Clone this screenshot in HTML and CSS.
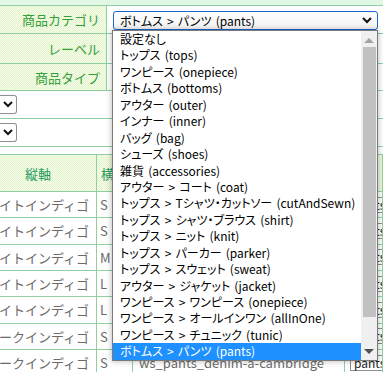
FILE: index.html
```html
<!DOCTYPE html>
<html lang="ja">
<head>
  <meta charset="UTF-8" />
  <title>商品登録</title>
  <link rel="stylesheet" href="styles.css">
</head>
<body>
  <div class="top-strip"></div>

  <div class="form">
    <div class="form-row row-cat">
      <div class="label">商品カテゴリ</div>
      <div class="field">
        <div class="select focus">
          <span>ボトムス &gt; パンツ (pants)</span>
          <svg width="10" height="7" viewBox="0 0 10 7"><polyline points="1,1 5,5 9,1" fill="none" stroke="#111" stroke-width="2"/></svg>
        </div>
        <div class="dropdown">
          <ul class="options">
            <li>設定なし</li>
            <li>トップス (tops)</li>
            <li>ワンピース (onepiece)</li>
            <li>ボトムス (bottoms)</li>
            <li>アウター (outer)</li>
            <li>インナー (inner)</li>
            <li>バッグ (bag)</li>
            <li>シューズ (shoes)</li>
            <li>雑貨 (accessories)</li>
            <li>アウター &gt; コート (coat)</li>
            <li>トップス &gt; Tシャツ・カットソー (cutAndSewn)</li>
            <li>トップス &gt; シャツ・ブラウス (shirt)</li>
            <li>トップス &gt; ニット (knit)</li>
            <li>トップス &gt; パーカー (parker)</li>
            <li>トップス &gt; スウェット (sweat)</li>
            <li>アウター &gt; ジャケット (jacket)</li>
            <li>ワンピース &gt; ワンピース (onepiece)</li>
            <li>ワンピース &gt; オールインワン (allInOne)</li>
            <li>ワンピース &gt; チュニック (tunic)</li>
            <li class="selected">ボトムス &gt; パンツ (pants)</li>
          </ul>
          <div class="scrollbar">
            <div class="arrow up"></div>
            <div class="thumb"></div>
            <div class="arrow down"></div>
          </div>
        </div>
      </div>
    </div>
    <div class="form-row row-label">
      <div class="label">レーベル</div>
      <div class="field"></div>
    </div>
    <div class="form-row row-type">
      <div class="label">商品タイプ</div>
      <div class="field"></div>
    </div>
  </div>

  <div class="filters">
    <div class="filter-row"><div class="stub"><svg width="10" height="7" viewBox="0 0 10 7"><polyline points="1,1 5,5 9,1" fill="none" stroke="#111" stroke-width="2"/></svg></div></div>
    <div class="filter-row"><div class="stub"><svg width="10" height="7" viewBox="0 0 10 7"><polyline points="1,1 5,5 9,1" fill="none" stroke="#111" stroke-width="2"/></svg></div></div>
  </div>

  <div class="grid">
    <div class="grid-row head">
      <div class="c1">縦軸</div>
      <div class="c2">横軸</div>
      <div class="c3">商品コード</div>
      <div class="c4">種別</div>
    </div>
    <div class="grid-row"><div class="c1">ホワイトインディゴ</div><div class="c2">S</div><div class="c3">ws_pants_denim-a-cambridge</div><div class="c4"><span class="mini">pants</span></div></div>
    <div class="grid-row"><div class="c1">ホワイトインディゴ</div><div class="c2">S</div><div class="c3">ws_pants_denim-a-cambridge</div><div class="c4"><span class="mini">pants</span></div></div>
    <div class="grid-row"><div class="c1">ホワイトインディゴ</div><div class="c2">M</div><div class="c3">ws_pants_denim-a-cambridge</div><div class="c4"><span class="mini">pants</span></div></div>
    <div class="grid-row"><div class="c1">ホワイトインディゴ</div><div class="c2">L</div><div class="c3">ws_pants_denim-a-cambridge</div><div class="c4"><span class="mini">pants</span></div></div>
    <div class="grid-row"><div class="c1">ホワイトインディゴ</div><div class="c2">L</div><div class="c3">ws_pants_denim-a-cambridge</div><div class="c4"><span class="mini">pants</span></div></div>
    <div class="grid-row"><div class="c1">ダークインディゴ</div><div class="c2">S</div><div class="c3">ws_pants_denim-a-cambridge</div><div class="c4"><span class="mini">pants</span></div></div>
    <div class="grid-row"><div class="c1">ダークインディゴ</div><div class="c2">S</div><div class="c3">ws_pants_denim-a-cambridge</div><div class="c4"><span class="mini">pants</span></div></div>
  </div>
</body>
</html>
```

FILE: styles.css
```css
body {
  margin: 0;
  font-family: "Noto Sans CJK JP", "Noto Sans", sans-serif;
  font-size: 13px;
  background: #fff;
  overflow: hidden;
  width: 383px;
}

.top-strip {
  height: 5px;
  background: #e2f8e6;
}

/* form table */
.form {
  border-top: 1px solid #90d0a0;
}

.form-row {
  display: flex;
  border-bottom: 1px solid #90d0a0;
}

.row-cat { height: 27px; }
.row-label { height: 29px; }
.row-type { height: 26px; }

.label {
  width: 100px;
  flex: none;
  padding-right: 6px;
  border-right: 1px solid #90d0a0;
  display: flex;
  align-items: center;
  justify-content: flex-end;
  color: #34a03a;
  background: repeating-conic-gradient(#e4f4cc 0 25%, #f6fcea 0 50%) 0 0 / 2px 2px;
}

.field {
  flex: 1;
  position: relative;
  padding: 5px 5px 0 6px;
}

.select {
  height: 17px;
  border: 1px solid #8f8f8f;
  border-radius: 3px;
  display: flex;
  align-items: center;
  justify-content: space-between;
  padding: 0 5px 0 6px;
  font-size: 12px;
  font-feature-settings: "palt";
  word-spacing: 1.5px;
  color: #000;
  background: linear-gradient(#fff, #f4f4f4);
}

.select.focus {
  border-color: #1a66d2;
}

/* open list */
.dropdown {
  position: absolute;
  left: 5px;
  top: 24px;
  width: 264px;
  height: 329px;
  border: 1px solid #7a7a7a;
  background: #fff;
  display: flex;
  box-shadow: 0 0 6px rgba(0, 0, 0, 0.3);
  z-index: 5;
}

.options {
  list-style: none;
  margin: 0;
  padding: 0;
  flex: 1;
  overflow: hidden;
}

.options li {
  height: 16.45px;
  line-height: 16.45px;
  padding-left: 7px;
  font-size: 12px;
  font-feature-settings: "palt";
  word-spacing: 1.5px;
  color: #000;
  white-space: nowrap;
}

.options li.selected {
  background: #1e90ff;
  color: #fff;
}

.scrollbar {
  width: 16px;
  flex: none;
  background: #f0f0f0;
  display: flex;
  flex-direction: column;
  align-items: center;
}

.thumb {
  width: 13px;
  height: 270px;
  background: #c1c1c1;
  margin: 4px 0 auto;
}

.arrow {
  width: 0;
  height: 0;
  border-left: 5px solid transparent;
  border-right: 5px solid transparent;
}

.arrow.up {
  margin-top: 7px;
  border-bottom: 5px solid #a3a3a3;
}

.arrow.down {
  margin-bottom: 6px;
  border-top: 5px solid #505050;
}

/* filter selects (scrolled, only the right edge shows) */
.filter-row {
  height: 27px;
  border-bottom: 1px solid #90d0a0;
  display: flex;
  align-items: center;
}

.stub {
  width: 15px;
  height: 17px;
  border: 1px solid #8f8f8f;
  border-left: none;
  border-radius: 0 3px 3px 0;
  display: flex;
  align-items: center;
  justify-content: center;
  padding-right: 1px;
}

/* variation grid */
.grid {
  margin-top: 7px;
  border-top: 1px solid #90d0a0;
}

.grid-row {
  display: flex;
  height: 25.33px;
  border-bottom: 1px solid #90d0a0;
  color: #6a6a6a;
  font-size: 13px;
}

.grid-row.head {
  height: 36px;
  color: #1f9a5e;
  background: repeating-conic-gradient(#e4f4cc 0 25%, #f6fcea 0 50%) 0 0 / 2px 2px;
}

.grid-row > div {
  display: flex;
  align-items: center;
  white-space: nowrap;
  overflow: hidden;
  border-right: 1px solid #90d0a0;
}

.c1 {
  width: 97px;
  flex: none;
  justify-content: flex-end;
  padding-right: 7px;
  box-sizing: border-box;
}

.head .c1 {
  justify-content: center;
  padding-right: 20px;
}

.c2 {
  width: 32px;
  flex: none;
  padding-left: 3px;
}

.head .c2 {
  padding-left: 4px;
}

.c3 {
  width: 205px;
  flex: none;
  padding-left: 6px;
}

.c4 {
  flex: 1;
  padding-left: 5px;
}

.mini {
  border: 1px solid #8f8f8f;
  padding: 0 3px;
  color: #222;
  font-size: 12px;
  line-height: 14px;
}
```
